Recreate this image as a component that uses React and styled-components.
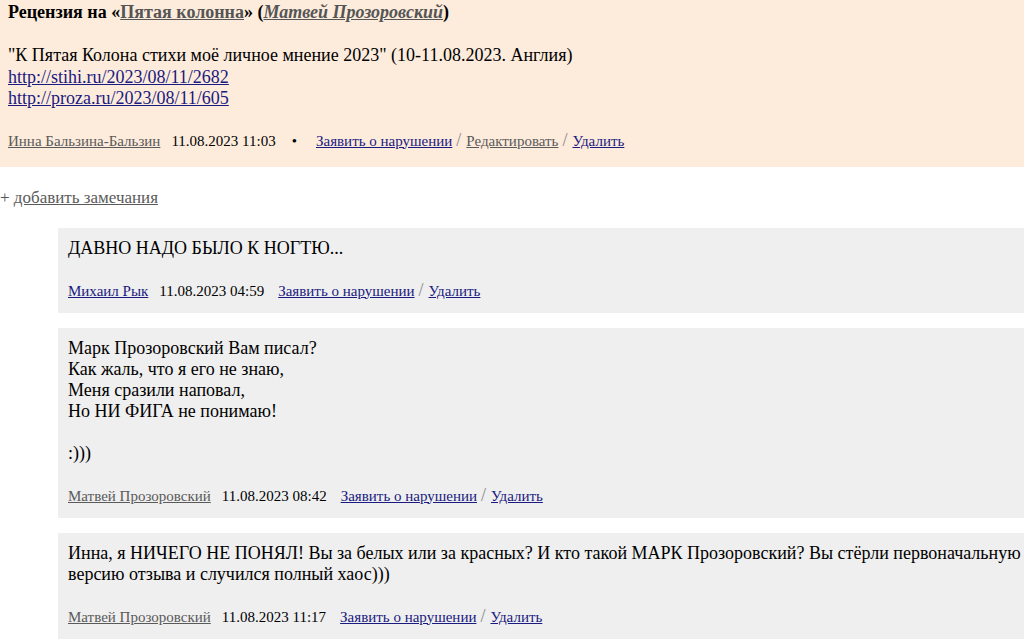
import React from "react";
import styled, { createGlobalStyle } from "styled-components";

const Global = createGlobalStyle`
  html, body { margin: 0; padding: 0; background: #fff; overflow-x: hidden; }
  body { font-family: "Liberation Serif", "Times New Roman", serif; font-size: 18px; color: #000; }
`;

const Review = styled.div`
  background: #fdecdc;
  padding: 2px 8px 17px 8px;
`;

const Title = styled.div`
  font-weight: bold;
  font-size: 18px;
  line-height: 21px;
`;

const TitleLink = styled.a`
  color: #555;
  text-decoration: underline;
  font-style: ${(p) => (p.$italic ? "italic" : "normal")};
`;

const Body = styled.div`
  margin-top: 22px;
  line-height: 21.5px;
`;

const Link = styled.a`
  color: ${(p) => (p.$gray ? "#5a5a5a" : "#1a1a80")};
  text-decoration: underline;
`;

const Meta = styled.div`
  margin-top: ${(p) => p.$top}px;
  font-size: 15px;
  line-height: 17px;
  height: 17px;
  white-space: nowrap;
`;

const Date = styled.span`
  margin: 0 ${(p) => p.$right || 14}px 0 11px;
`;

const Bullet = styled.span`
  margin: 0 19px 0 0;
`;

const Sep = styled.span`
  color: #888;
  font-size: 18px;
  line-height: 0;
  margin: 0 5px 0 4px;
`;

const AddNote = styled.div`
  margin-top: 21px;
  font-size: 17px;
  line-height: 20px;
  color: #555;
`;

const Comments = styled.div`
  margin: 20px 0 0 58px;
  display: flex;
  flex-direction: column;
  gap: 15px;
`;

const Comment = styled.div`
  background: #efefef;
  padding: 10px 0 13px 10px;
`;

const Text = styled.div`
  line-height: 21px;
`;

function Actions({ items }) {
  return items.map((it, i) => (
    <React.Fragment key={i}>
      {i > 0 && <Sep>/</Sep>}
      <Link href="#" $gray={it.gray}>{it.t}</Link>
    </React.Fragment>
  ));
}

function CommentBlock({ author, authorGray, date, children }) {
  return (
    <Comment>
      <Text>{children}</Text>
      <Meta $top={24}>
        <Link href="#" $gray={authorGray}>{author}</Link>
        <Date>{date}</Date>
        <Actions items={[{ t: "Заявить о нарушении" }, { t: "Удалить" }]} />
      </Meta>
    </Comment>
  );
}

export default function App() {
  return (
    <>
      <Global />
      <Review>
        <Title>
          Рецензия на «<TitleLink href="#">Пятая колонна</TitleLink>» (
          <TitleLink href="#" $italic>Матвей Прозоровский</TitleLink>)
        </Title>
        <Body>
          "К Пятая Колона стихи моё личное мнение 2023" (10-11.08.2023. Англия)
          <br />
          <Link href="#">http://stihi.ru/2023/08/11/2682</Link>
          <br />
          <Link href="#">http://proza.ru/2023/08/11/605</Link>
        </Body>
        <Meta $top={23}>
          <Link href="#" $gray>Инна Бальзина-Бальзин</Link>
          <Date $right={16}>11.08.2023 11:03</Date>
          <Bullet>•</Bullet>
          <Actions
            items={[
              { t: "Заявить о нарушении" },
              { t: "Редактировать", gray: true },
              { t: "Удалить" },
            ]}
          />
        </Meta>
      </Review>
      <AddNote>
        + <Link href="#" $gray>добавить замечания</Link>
      </AddNote>
      <Comments>
        <CommentBlock author="Михаил Рык" date="11.08.2023 04:59">
          ДАВНО НАДО БЫЛО К НОГТЮ...
        </CommentBlock>
        <CommentBlock author="Матвей Прозоровский" authorGray date="11.08.2023 08:42">
          Марк Прозоровский Вам писал?
          <br />
          Как жаль, что я его не знаю,
          <br />
          Меня сразили наповал,
          <br />
          Но НИ ФИГА не понимаю!
          <br />
          <br />
          :)))
        </CommentBlock>
        <CommentBlock author="Матвей Прозоровский" authorGray date="11.08.2023 11:17">
          Инна, я НИЧЕГО НЕ ПОНЯЛ! Вы за белых или за красных? И кто такой МАРК
          Прозоровский? Вы стёрли первоначальную версию отзыва и случился полный хаос)))
        </CommentBlock>
      </Comments>
    </>
  );
}
